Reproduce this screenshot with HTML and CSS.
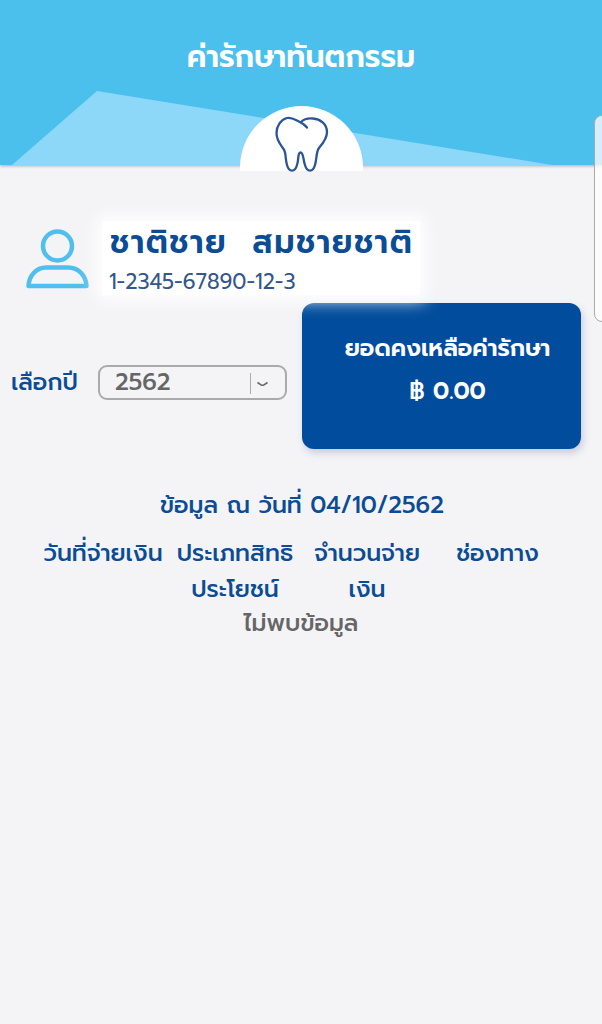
FILE: index.html
```html
<!DOCTYPE html>
<html lang="th">
<head>
    <meta charset="UTF-8">
    <meta name="viewport" content="width=device-width, initial-scale=1.0">
    <title>ค่ารักษาทันตกรรม</title>
    <link rel="stylesheet" href="styles.css">
</head>
<body>
    <header class="header">
        <svg class="header-shape" viewBox="0 0 602 165">
            <path d="M12 165 L97 91 L552 165 Z" fill="#8dd7f8"/>
        </svg>
        <h1>ค่ารักษาทันตกรรม</h1>
        <div class="tooth">
            <svg width="54" height="58" viewBox="0 0 54 58" fill="none" stroke="#2a5597" stroke-width="2.3" stroke-linecap="round" stroke-linejoin="round">
                <path d="M32 13.500 C30 11 27 9 23 7 C19 5 16 3 12 4 C6 5.500 1.500 12 1.500 19 C1.500 27 6 31 8.500 35 C11.500 39 10 45 12 51 C14 58.500 20 58.500 22 51 C24 45 22.500 38.500 25.500 38.500 C28.500 38.500 28 45 30 51 C32 58.500 38 58.500 40 51 C42 44 41 38 44 34 C46.500 31 52 25 52 18 C52 10 45 5 38 4.500 C33 4 29 5 26 8"/>
            </svg>
        </div>
    </header>

    <aside class="side-tab"></aside>

    <main>
        <section class="profile">
            <svg class="avatar" width="63" height="60" viewBox="0 0 63 60" fill="none" stroke="#51bfeb" stroke-width="4.500" stroke-linejoin="round">
                <circle cx="31.500" cy="17" r="14.500"/>
                <path d="M2.500 57 C3 47 10 38.500 20 38.500 H42 C53 38.500 60 47 60.500 57 Z"/>
            </svg>
            <div class="person">
                <h2><span>ชาติชาย</span><span>สมชายชาติ</span></h2>
                <p>1-2345-67890-12-3</p>
            </div>
        </section>

        <section class="summary">
            <div class="year">
                <span class="year-label">เลือกปี</span>
                <div class="select">
                    <span>2562</span>
                    <svg width="36" height="24" viewBox="0 0 36 24" fill="none" stroke="#666">
                        <path d="M1.500 3 V24" stroke="#aaa"/>
                        <path d="M8.500 12.500 L12 14.800 Q13.500 15.800 15 14.800 L18.500 12.500" stroke-width="1.600"/>
                    </svg>
                </div>
            </div>
            <div class="balance">
                <p>ยอดคงเหลือค่ารักษา</p>
                <p>฿ 0.00</p>
            </div>
        </section>

        <section class="history">
            <p class="as-of">ข้อมูล ณ วันที่ 04/10/2562</p>
            <div class="columns">
                <span>วันที่จ่ายเงิน</span>
                <span>ประเภทสิทธิ<br>ประโยชน์</span>
                <span>จำนวนจ่าย<br>เงิน</span>
                <span>ช่องทาง</span>
            </div>
            <p class="empty">ไม่พบข้อมูล</p>
        </section>
    </main>
</body>
</html>
```
FILE: styles.css
```css
* {
    box-sizing: border-box;
}
body {
    margin: 0;
    min-height: 1024px;
    background-color: #f4f4f7;
    color: #0b4c95;
    font-family: "Prompt", "Kanit", "Noto Sans Thai", "Noto Sans", sans-serif;
    font-size: 23.5px;
    overflow: hidden;
}
h1, h2, p {
    margin: 0;
    white-space: nowrap;
}
.header {
    position: relative;
    height: 165px;
    padding-top: 36px;
    background-color: #4cc0ed;
    box-shadow: 0 1px 3px rgba(0, 0, 0, 0.3);
    text-align: center;
}
.header-shape {
    position: absolute;
    left: 0;
    top: 0;
    width: 602px;
    height: 165px;
}
.header h1 {
    position: relative;
    color: white;
    font-size: 30px;
    line-height: 42px;
    font-weight: 600;
}
.tooth {
    position: absolute;
    left: 240px;
    bottom: -6px;
    width: 123px;
    height: 65px;
    padding-top: 8px;
    border-radius: 62px 62px 0 0;
    background-color: white;
}
.side-tab {
    position: absolute;
    left: 594px;
    top: 115px;
    width: 20px;
    height: 207px;
    border: 1px solid #aaa;
    border-radius: 8px;
    background-color: rgba(255, 255, 255, 0.75);
}
.profile {
    display: flex;
    align-items: flex-start;
    gap: 13px;
    padding: 56px 0 0 26px;
}
.avatar {
    margin-top: 8px;
}
.person {
    position: relative;
    width: 318px;
    height: 74px;
    padding-left: 7px;
    background-color: white;
    box-shadow: 0 0 16px 5px white;
}
.person h2 {
    display: flex;
    gap: 25px;
    padding-left: 1px;
    font-size: 32px;
    line-height: 43px;
    font-weight: 600;
    letter-spacing: 1.5px;
}
.person p {
    color: #33568c;
    font-size: 21px;
    line-height: 36px;
}
.summary {
    display: flex;
    justify-content: space-between;
    padding: 8px 21px 0 11px;
}
.year {
    display: flex;
    align-items: center;
    width: 276px;
    height: 34px;
    margin-top: 62px;
}
.year-label {
    width: 87px;
    font-weight: 500;
    white-space: nowrap;
}
.select {
    display: flex;
    flex: 1;
    align-items: center;
    justify-content: space-between;
    height: 35px;
    padding-left: 15px;
    border: 2px solid #aaa;
    border-radius: 9px;
    color: #666;
    font-weight: 500;
}
.balance {
    width: 279px;
    height: 146px;
    padding: 24px 0 0 12px;
    border-radius: 12px;
    background-color: #014c9c;
    box-shadow: 2px 4px 7px rgba(70, 90, 150, 0.25);
    color: white;
    font-weight: 600;
    text-align: center;
}
.balance p {
    line-height: 43px;
}
.history {
    padding-top: 38px;
    font-weight: 500;
    text-align: center;
}
.as-of {
    padding-left: 2px;
    line-height: 36px;
}
.columns {
    display: grid;
    grid-template-columns: 130px 134px 130px 131px;
    padding: 12px 0 0 38px;
    line-height: 36px;
    white-space: nowrap;
}
.empty {
    color: #666;
    line-height: 32px;
}
```
